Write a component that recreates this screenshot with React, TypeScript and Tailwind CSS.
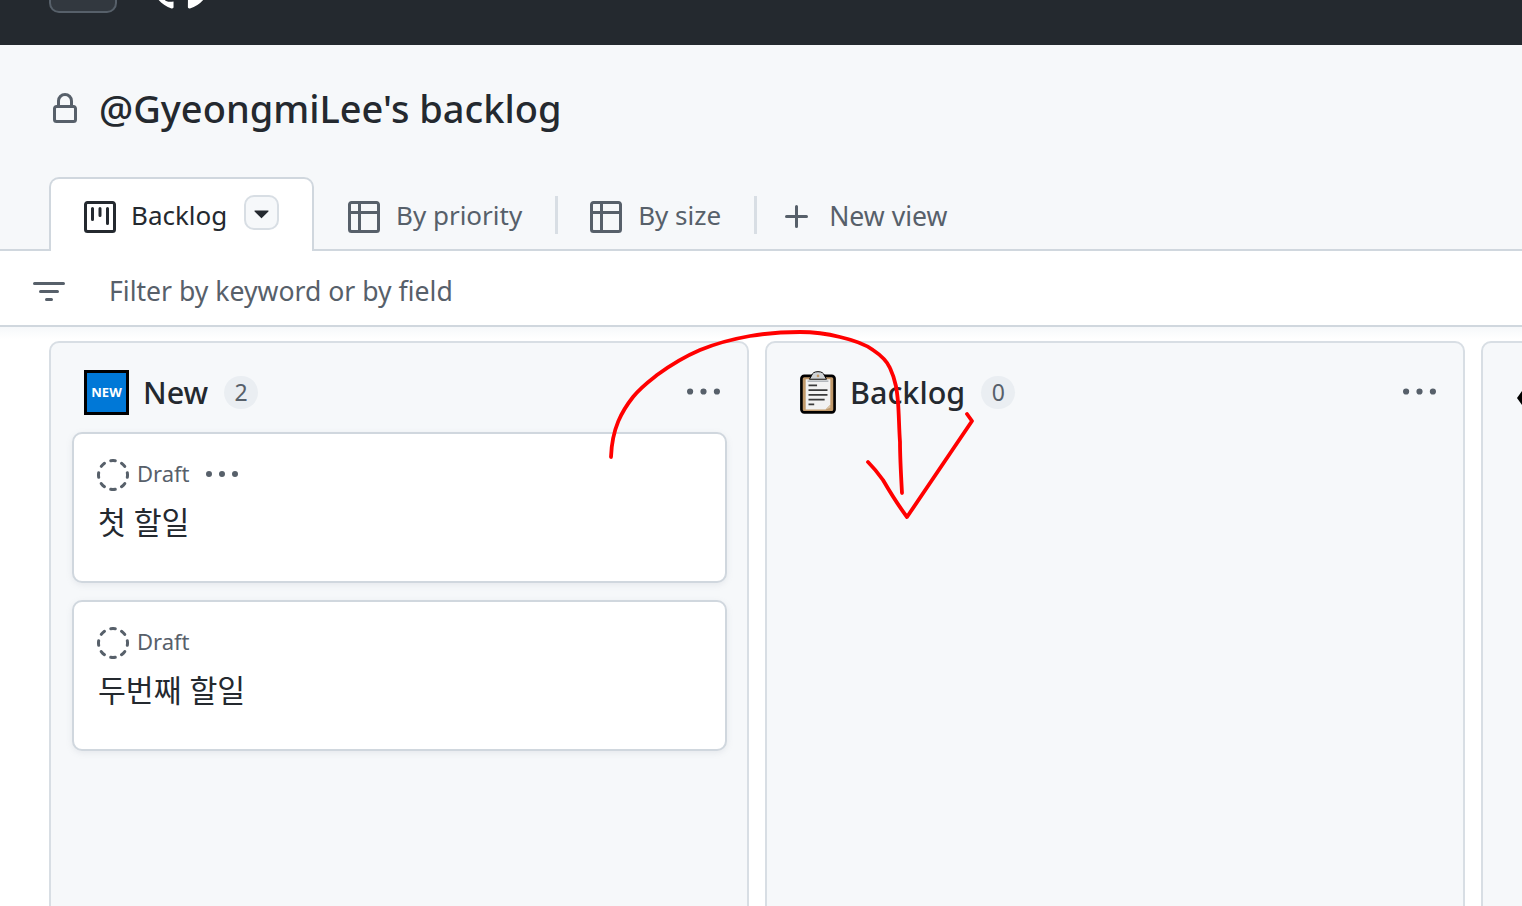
const font = { fontFamily: '"Noto Sans", "Noto Sans CJK KR", sans-serif' };

// octicons 16px, react-icons only ships the 24px cut
const paths = {
  lock: "M4 4a4 4 0 0 1 8 0v2h.25c.966 0 1.75.784 1.75 1.75v5.5A1.75 1.75 0 0 1 12.25 15h-8.5A1.75 1.75 0 0 1 2 13.25v-5.5C2 6.784 2.784 6 3.75 6H4Zm8.25 3.5h-8.5a.25.25 0 0 0-.25.25v5.5c0 .138.112.25.25.25h8.5a.25.25 0 0 0 .25-.25v-5.5a.25.25 0 0 0-.25-.25ZM10.5 6V4a2.5 2.5 0 1 0-5 0v2Z",
  project: "M0 1.75C0 .784.784 0 1.75 0h12.5C15.216 0 16 .784 16 1.75v12.5A1.75 1.75 0 0 1 14.25 16H1.75A1.75 1.75 0 0 1 0 14.25ZM1.75 1.5a.25.25 0 0 0-.25.25v12.5c0 .138.112.25.25.25h12.5a.25.25 0 0 0 .25-.25V1.75a.25.25 0 0 0-.25-.25ZM11.75 3a.75.75 0 0 1 .75.75v7.5a.75.75 0 0 1-1.5 0v-7.5a.75.75 0 0 1 .75-.75Zm-8.25.75a.75.75 0 0 1 1.5 0v5.5a.75.75 0 0 1-1.5 0ZM8 3a.75.75 0 0 1 .75.75v3.5a.75.75 0 0 1-1.5 0v-3.5A.75.75 0 0 1 8 3Z",
  table: "M0 1.75C0 .784.784 0 1.75 0h12.5C15.216 0 16 .784 16 1.75v12.5A1.75 1.75 0 0 1 14.25 16H1.75A1.75 1.75 0 0 1 0 14.25ZM6.5 6.5v8h7.75a.25.25 0 0 0 .25-.25V6.5Zm8-1.5V1.75a.25.25 0 0 0-.25-.25H6.5V5Zm-13 1.5v7.75c0 .138.112.25.25.25H5v-8ZM5 5V1.5H1.75a.25.25 0 0 0-.25.25V5Z",
  plus: "M7.75 2a.75.75 0 0 1 .75.75V7h4.25a.75.75 0 0 1 0 1.5H8.5v4.25a.75.75 0 0 1-1.5 0V8.5H2.75a.75.75 0 0 1 0-1.5H7V2.75A.75.75 0 0 1 7.75 2Z",
  filter: "M.75 3h14.5a.75.75 0 0 1 0 1.5H.75a.75.75 0 0 1 0-1.5ZM3 7.75A.75.75 0 0 1 3.75 7h8.5a.75.75 0 0 1 0 1.5h-8.5A.75.75 0 0 1 3 7.75Zm3 4a.75.75 0 0 1 .75-.75h2.5a.75.75 0 0 1 0 1.5h-2.5a.75.75 0 0 1-.75-.75Z",
  kebab: "M8 9a1.5 1.5 0 1 0 0-3 1.5 1.5 0 0 0 0 3ZM1.5 9a1.5 1.5 0 1 0 0-3 1.5 1.5 0 0 0 0 3Zm13 0a1.5 1.5 0 1 0 0-3 1.5 1.5 0 0 0 0 3Z",
  triangle: "m4.427 7.427 3.396 3.396a.25.25 0 0 0 .354 0l3.396-3.396A.25.25 0 0 0 11.396 7H4.604a.25.25 0 0 0-.177.427Z",
  draft: "M14.307 11.655a.75.75 0 0 1 .165 1.048 8.05 8.05 0 0 1-1.769 1.77.75.75 0 0 1-.883-1.214 6.552 6.552 0 0 0 1.44-1.439.75.75 0 0 1 1.047-.165Zm-2.652-9.962a.75.75 0 0 1 1.048-.165 8.05 8.05 0 0 1 1.77 1.769.75.75 0 0 1-1.214.883 6.552 6.552 0 0 0-1.439-1.44.75.75 0 0 1-.165-1.047ZM6.749.097a8.074 8.074 0 0 1 2.502 0 .75.75 0 1 1-.233 1.482 6.558 6.558 0 0 0-2.036 0A.751.751 0 0 1 6.749.097ZM.955 6.125a.75.75 0 0 1 .624.857 6.558 6.558 0 0 0 0 2.036.75.75 0 1 1-1.482.233 8.074 8.074 0 0 1 0-2.502.75.75 0 0 1 .858-.624Zm14.09 0a.75.75 0 0 1 .858.624c.13.829.13 1.673 0 2.502a.75.75 0 1 1-1.482-.233 6.558 6.558 0 0 0 0-2.036.75.75 0 0 1 .624-.857Zm-8.92 8.92a.75.75 0 0 1 .857-.624 6.558 6.558 0 0 0 2.036 0 .75.75 0 1 1 .233 1.482c-.829.13-1.673.13-2.502 0a.75.75 0 0 1-.624-.858Zm-4.432-3.39a.75.75 0 0 1 1.048.165 6.552 6.552 0 0 0 1.439 1.44.751.751 0 0 1-.883 1.212 8.05 8.05 0 0 1-1.77-1.769.75.75 0 0 1 .166-1.048Zm2.652-9.962A.75.75 0 0 1 4.18 2.74a6.556 6.556 0 0 0-1.44 1.44.751.751 0 0 1-1.212-.883 8.05 8.05 0 0 1 1.769-1.77.75.75 0 0 1 1.048.166Z",
};

function Octicon({ name, className = "h-8 w-8" }: { name: keyof typeof paths; className?: string }) {
  return (
    <svg viewBox="0 0 16 16" fill="currentColor" className={`shrink-0 ${className}`}>
      <path d={paths[name]} />
    </svg>
  );
}

function GithubMark() {
  return (
    <svg viewBox="0 0 16 16" className="mt-[-50px] h-[60px] w-[60px] shrink-0" fill="#ffffff">
      <path d="M8 0C3.58 0 0 3.58 0 8c0 3.54 2.29 6.53 5.47 7.59.4.07.55-.17.55-.38 0-.19-.01-.82-.01-1.49-2.01.37-2.53-.49-2.69-.94-.09-.23-.48-.94-.82-1.13-.28-.15-.68-.52-.01-.53.63-.01 1.08.58 1.23.82.72 1.21 1.87.87 2.33.66.07-.52.28-.87.51-1.07-1.78-.2-3.64-.89-3.64-3.95 0-.87.31-1.59.82-2.15-.08-.2-.36-1.02.08-2.12 0 0 .67-.21 2.2.82.64-.18 1.32-.27 2-.27.68 0 1.36.09 2 .27 1.53-1.04 2.2-.82 2.2-.82.44 1.1.16 1.92-.08 2.12.51.56.82 1.27.82 2.15 0 3.07-1.87 3.75-3.65 3.95.29.25.54.73.54 1.48 0 1.07-.01 1.93-.01 2.2 0 .21.15.46.55.38A8.013 8.013 0 0016 8c0-4.42-3.58-8-8-8z" />
    </svg>
  );
}

function ClipboardEmoji() {
  return (
    <svg viewBox="0 0 38 46" className="h-[45px] w-[36px] shrink-0">
      <rect x="1.5" y="5.5" width="35" height="38.5" rx="3" fill="#c19a6b" stroke="#000000" strokeWidth="2.8" />
      <path d="M6 9h26v27l-5 5H6z" fill="#f2f2f2" />
      <path d="M27 41l5-5v3z" fill="#d9c3a6" />
      <path d="M12 5.5c1-3 3-4.5 7-4.5s6 1.5 7 4.5l2 3.5H10z" fill="#cfd3d6" stroke="#000000" strokeWidth="1" />
      <circle cx="19" cy="5.5" r="1.4" fill="#c19a6b" />
      <path d="M8 11h22" stroke="#9aa0a6" strokeWidth="1.2" />
      <path d="M9 15.5h9M9 20.5h20M9 25.5h20M9 30.5h17M9 35.5h6" stroke="#3a3a3a" strokeWidth="1.8" />
    </svg>
  );
}

function Card({ title, menu }: { title: string; menu?: boolean }) {
  return (
    <div className="h-[151px] rounded-[10px] border-2 border-[#d0d7de] bg-white pl-[23px] pt-[25px] shadow-[0_2px_6px_rgba(140,149,159,0.15)]">
      <div className="flex h-8 items-center text-[#57606a]">
        <Octicon name="draft" />
        <span className="mb-1 ml-2 text-[22px]">Draft</span>
        {menu && <Octicon name="kebab" className="ml-4 h-8 w-8" />}
      </div>
      <div className="mt-[15px] pl-px text-[30.3px] leading-[34px] text-[#24292f]">{title}</div>
    </div>
  );
}

function ColumnHeader({ icon, name, count }: { icon: React.ReactNode; name: string; count: number }) {
  return (
    <div className="flex h-[45px] items-center">
      {icon}
      <span className="ml-[14px] text-[30.5px] font-medium leading-none text-[#24292f]">{name}</span>
      <span className="ml-4 flex h-[33px] min-w-[34px] items-center justify-center rounded-full bg-[#eaeef2] text-[23px] text-[#57606a]">{count}</span>
      <Octicon name="kebab" className="ml-auto mr-[7px] h-[33px] w-[33px] text-[#57606a]" />
    </div>
  );
}

export default function App() {
  return (
    <div className="relative h-[906px] w-[1522px] overflow-hidden bg-white" style={font}>
      <header className="flex h-[45px] items-start overflow-hidden bg-[#24292f] pl-[49px]">
        <div className="h-[13px] w-[68px] rounded-b-[10px] border-2 border-t-0 border-[#57606a] bg-[#32383f]" />
        <div className="ml-[34px] flex h-[10px] items-start overflow-hidden">
          <GithubMark />
        </div>
      </header>

      <div className="h-[206px] border-b-2 border-[#d0d7de] bg-[#f6f8fa]">
        <div className="flex h-[132px] items-center pb-1 pl-[49px]">
          <Octicon name="lock" className="h-8 w-8 text-[#57606a]" />
          <h1 className="mb-0.5 ml-[18px] text-[38px] font-medium leading-none text-[#24292f]">@GyeongmiLee's backlog</h1>
        </div>
        <nav className="flex h-[72px] items-center pl-[49px] text-[26px] text-[#57606a]">
          <div className="flex h-[74px] w-[265px] items-start self-start rounded-t-[10px] border-2 border-b-0 border-[#d0d7de] bg-white pl-[33px] pt-[22px] text-[#24292f]">
            <Octicon name="project" />
            <span className="ml-[15px] mt-[-2px] leading-8">Backlog</span>
            <span className="ml-[17px] mt-[-6px] flex h-[35px] w-[35px] items-center justify-center rounded-[10px] border-2 border-[#d8dee4] bg-[#f6f8fa]">
              <Octicon name="triangle" className="h-[31px] w-[31px]" />
            </span>
          </div>
          <div className="ml-[34px] mt-2 flex items-center">
            <Octicon name="table" />
            <span className="mb-1 ml-4">By priority</span>
          </div>
          <div className="ml-[33px] mt-1 h-[38px] w-[3px] bg-[#d8dee4]" />
          <div className="ml-8 mt-2 flex items-center">
            <Octicon name="table" />
            <span className="mb-1 ml-4">By size</span>
          </div>
          <div className="ml-[33px] mt-1 h-[38px] w-[3px] bg-[#d8dee4]" />
          <div className="ml-6 mt-2 flex items-center">
            <Octicon name="plus" />
            <span className="ml-4 text-[26.6px]">New view</span>
          </div>
        </nav>
      </div>

      <div className="flex h-[76px] items-center border-b-2 border-[#d0d7de] pl-[33px] pt-2">
        <Octicon name="filter" className="h-8 w-8 text-[#57606a]" />
        <span className="ml-[44px] text-[26.6px] text-[#57606a]">Filter by keyword or by field</span>
      </div>

      <main className="flex gap-4 bg-gradient-to-b from-[#f6f8fa] to-white to-[12px] pl-[49px] pt-[14px]">
        <section className="h-[600px] w-[700px] shrink-0 rounded-t-[10px] border-2 border-[#d8dee4] bg-[#f6f8fa] pl-[21px] pr-5 pt-[27px]">
          <ColumnHeader
            name="New"
            count={2}
            icon={
              <div className="ml-3 flex h-[45px] w-[45px] shrink-0 items-center justify-center border-[3px] border-black bg-[#0078d7] text-[13px] font-bold text-white">
                NEW
              </div>
            }
          />
          <div className="mt-[17px] flex flex-col gap-[17px]">
            <Card title="첫 할일" menu />
            <Card title="두번째 할일" />
          </div>
        </section>
        <section className="h-[600px] w-[700px] shrink-0 rounded-t-[10px] border-2 border-[#d8dee4] bg-[#f6f8fa] pl-[21px] pr-5 pt-[27px]">
          <ColumnHeader name="Backlog" count={0} icon={<div className="ml-3"><ClipboardEmoji /></div>} />
        </section>
        <section className="h-[600px] w-[100px] shrink-0 rounded-t-[10px] border-2 border-[#d8dee4] bg-[#f6f8fa] pl-[33px] pt-[47px]">
          <svg viewBox="0 0 10 16" className="h-4 w-[10px]">
            <path d="M6 1L1 8l5 7 3-7z" fill="#000000" />
          </svg>
        </section>
      </main>

      {/* red pen annotation drawn over the screenshot */}
      <svg viewBox="0 0 1522 906" className="pointer-events-none absolute inset-0 h-[906px] w-[1522px]" fill="none" stroke="#ff0000" strokeWidth="3.8" strokeLinecap="round" strokeLinejoin="round">
        <path d="M611 457C612 428 622 411 633 397C640 388 648 382 657 375C672 364 686 356 700 350C717 343 733 339 750 336C768 333 784 332 800 332C815 332 828 334 840 337C853 340 865 344 873 350C882 356 887 361 890 368C896 381 897 391 898 402C899 415 899 428 900 442C900 458 901 475 902 493" />
        <path d="M868 462C873 467 878 473 883 480C890 492 898 505 907 517L972 421L967 414" />
      </svg>
    </div>
  );
}
